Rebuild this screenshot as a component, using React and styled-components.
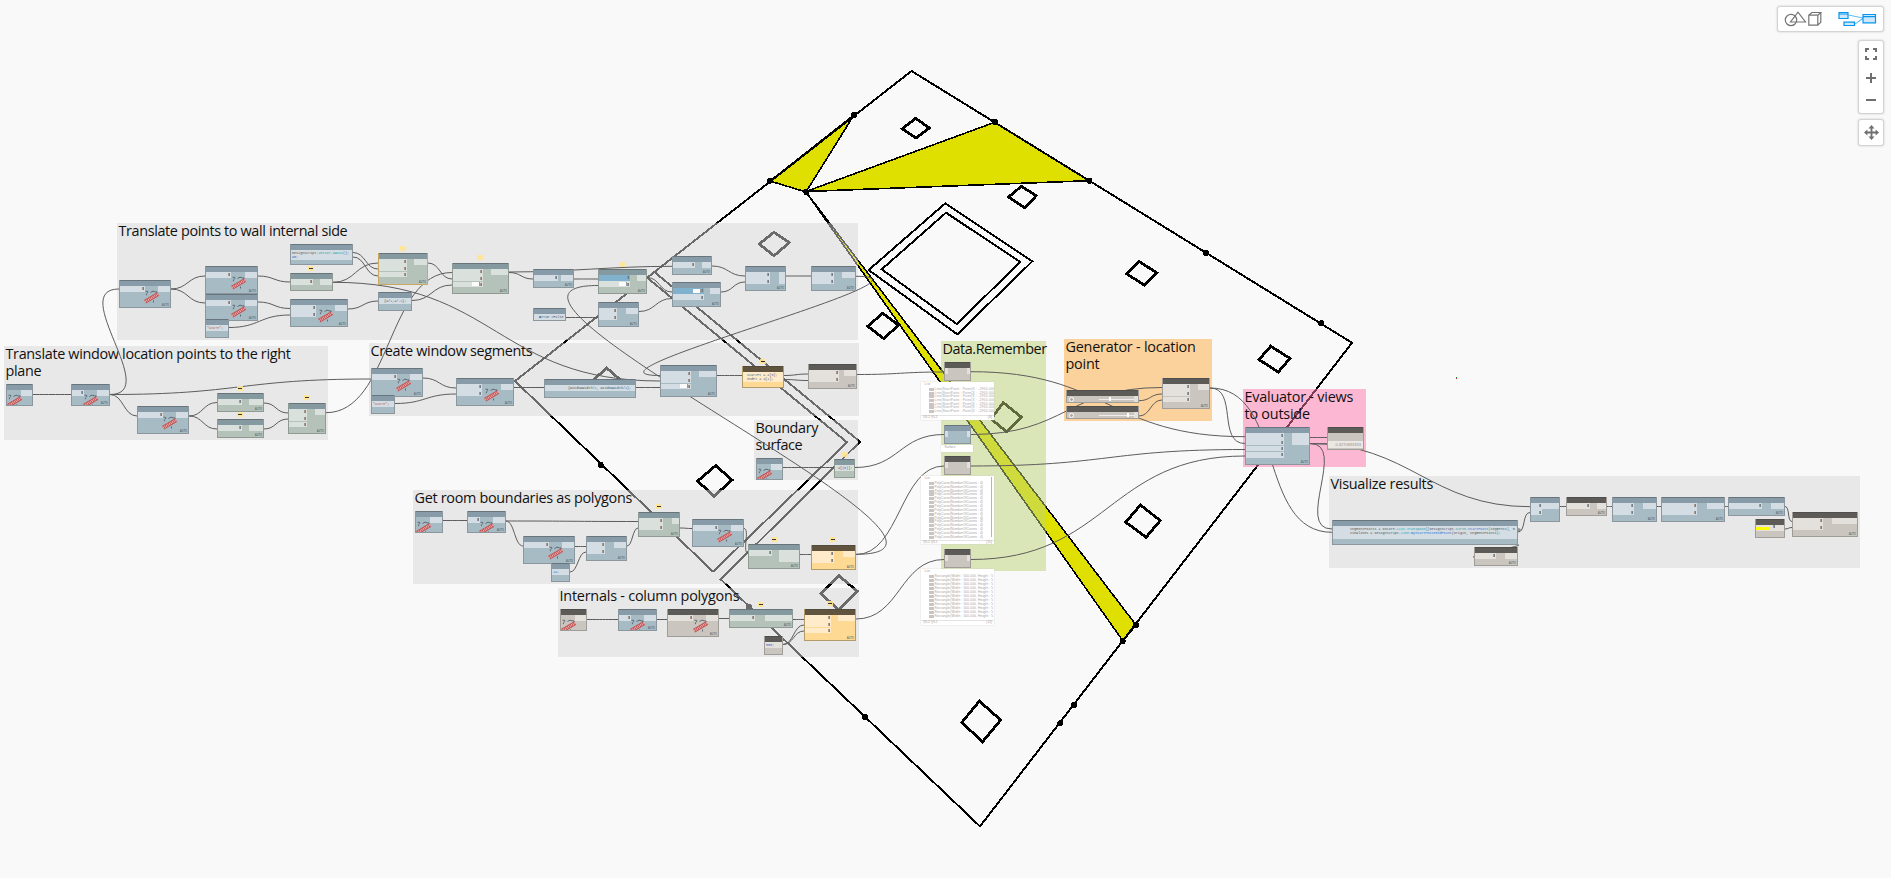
import React from "react";
import styled, { createGlobalStyle, css } from "styled-components";

const GlobalStyle = createGlobalStyle`
  body { margin: 0; background: #f9f9f9; overflow: hidden; font-family: "Open Sans", "Noto Sans", sans-serif; }
  * { box-sizing: border-box; }
`;

const Workspace = styled.main`
  position: relative;
  width: 1891px;
  height: 878px;
  overflow: hidden;
  background: #f9f9f9;
`;

const Layer = styled.svg`
  position: absolute;
  inset: 0;
  width: 1891px;
  height: 878px;
  pointer-events: none;
`;

const placed = css`
  position: absolute;
  left: ${(p) => p.$x}px;
  top: ${(p) => p.$y}px;
  width: ${(p) => p.$w}px;
  height: ${(p) => p.$h}px;
`;

const tints = {
  gray: "rgba(215,215,215,.494)",
  green: "rgba(190,212,119,.5)",
  orange: "rgba(255,171,64,.5)",
  pink: "rgba(255,120,171,.5)",
};

const Group = styled.section`
  ${placed}
  padding-left: 1.5px;
  background: ${(p) => tints[p.$tint]};
`;

const GroupTitle = styled.h2`
  margin: -1px 0 0;
  font-size: 14.4px;
  font-weight: 400;
  line-height: 17.3px;
  letter-spacing: ${(p) => p.$track ?? -0.32}px;
  color: #111;
  white-space: pre;
`;

/* ---------- nodes ---------- */
const kinds = {
  blue: { head: "#879ba8", body: "#a7bbc5", port: "#d3dde3", edge: "#8c979d" },
  green: { head: "#859aa0", body: "#b5c2ba", port: "#dae1dd", edge: "#8f9a93" },
  gray: { head: "#5d5b58", body: "#cbc5bf", port: "#e4e0dc", edge: "#a09c97" },
  gold: { head: "#61543f", body: "#fdd993", port: "#ffebca", edge: "#b39c6c" },
};

const NodeCard = styled.article`
  ${placed}
  display: flex;
  flex-direction: column;
  overflow: hidden;
  background: ${(p) => kinds[p.$kind].body};
  border: 1px solid ${(p) => p.$edge || kinds[p.$kind].edge};
  border-top: 0;
`;

const NodeHeader = styled.div`
  flex: none;
  height: 6px;
  margin: 0 -1px;
  border-top: 1px solid rgba(60, 60, 60, 0.4);
  background: ${(p) => kinds[p.$kind].head};
`;

const NodeBody = styled.div`
  position: relative;
  display: flex;
  justify-content: space-between;
  flex: 1;
`;

const Inputs = styled.div`
  display: flex;
  flex-direction: column;
  gap: 0.6px;
  width: ${(p) => p.$w}px;
`;

const InPort = styled.div`
  display: flex;
  align-items: center;
  justify-content: flex-end;
  height: 5.7px;
  padding-right: 1px;
  background: ${(p) => (p.$active ? "#80b2ce" : kinds[p.$kind].port)};
`;

const Chevron = styled.i`
  width: 2px;
  height: 3px;
  background: linear-gradient(90deg, #b79a83, #4f6175);
  opacity: 0.85;
`;

const DefaultValue = styled.i`
  width: 8px;
  height: 4px;
  background: #fbfbfb;
  border-right: 1px solid #999;
`;

const OutPort = styled.div`
  width: ${(p) => p.$w}px;
  height: ${(p) => p.$h || 6}px;
  background: ${(p) => kinds[p.$kind].port};
`;

const Lacing = styled.span`
  position: absolute;
  right: 1px;
  bottom: 0.5px;
  font: 700 2.6px/3px "Liberation Sans", sans-serif;
  color: rgba(70, 85, 95, 0.75);
`;

const PreviewSlot = styled.div`
  position: absolute;
  top: 1px;
  left: ${(p) => p.$left}px;
  width: 17px;
  height: 15px;
`;

const Code = styled.pre`
  margin: 0;
  flex: 1;
  height: ${(p) => p.$h}px;
  padding: 1px 0 0 ${(p) => p.$indent ?? 1}px;
  overflow: hidden;
  background: ${(p) => kinds[p.$kind].port};
  color: #4f565f;
  font: 3.4px/4px "Liberation Mono", monospace;
  b { font-weight: 400; color: #2f9a94; }
  i { font-style: normal; color: #2b6fd6; }
  em { font-style: normal; color: #c07545; }
`;

const Marks = () => (
  <svg width="17" height="15" viewBox="0 0 17 15">
    <path d="M2.5 2.3h2.2v1.4L3.4 4.8v1.4M7.5 3.5q2.5-2.4 5-.6h1.5v2M10.5 11.5v2" fill="none" stroke="#5f6b73" strokeWidth="1" />
    <path d="M2 12.8 15.2 5" stroke="#c25152" strokeWidth="4.2" />
    <path d="M2 12.8 15.2 5" stroke="#eab5b4" strokeWidth="2.4" strokeDasharray=".9 .9" />
  </svg>
);

function Node({ box, kind = "blue", ins = 0, rows = 1, out = 12, outH, active, value, glyph, lace = true, code, codeH = 6, indent, edge, children }) {
  const [x, y, w, h] = box;
  return (
    <NodeCard $x={x} $y={y} $w={w} $h={h} $kind={kind} $edge={edge}>
      <NodeHeader $kind={kind} />
      <NodeBody>
        {children || (code ? <Code $kind={kind} $h={codeH} $indent={indent}>{code}</Code> : (
          <>
            <Inputs $w={ins}>
              {ins > 0 && Array.from({ length: rows }, (_, i) => (
                <InPort key={i} $kind={kind} $active={active === i}>
                  {value === i && <DefaultValue />}
                  {ins > 8 && <Chevron />}
                </InPort>
              ))}
            </Inputs>
            {glyph !== undefined && <PreviewSlot $left={glyph}><Marks /></PreviewSlot>}
            <OutPort $w={out} $h={outH} $kind={kind} />
          </>
        ))}
        {lace && h > 18 && w > 35 && !code && <Lacing>AUTO</Lacing>}
      </NodeBody>
    </NodeCard>
  );
}

const nodes = [
  { box: [119, 280, 52, 28], ins: 25, glyph: 23 },
  { box: [205, 266, 53, 28], ins: 25, glyph: 24 },
  { box: [205, 294, 53, 27], ins: 25, glyph: 24 },
  { box: [205, 319, 24, 19], code: <><em>"WIDTH"</em>;</> },
  { box: [290, 244, 63, 21], codeH: 10, code: <>DesignScript.<b>Vector</b>.<b>ZAxis</b>();{"\n"}<i>90;</i></> },
  { box: [290, 273, 43, 18], kind: "green", ins: 22 },
  { box: [290, 299, 58, 28], ins: 25, rows: 2, glyph: 26 },
  { box: [378, 253, 50, 32], kind: "green", ins: 28, rows: 3, out: 13, edge: "#c9a95f" },
  { box: [378, 292, 34, 19], indent: 5, code: <>{"{"}a/<i>2</i>,a/<i>-2</i>{"};"}</> },
  { box: [452, 263, 57, 31], kind: "green", ins: 30, rows: 3, out: 17, value: 2 },
  { box: [533, 269, 41, 19], ins: 24 },
  { box: [533, 308, 33, 13], code: "  ◉True ○False" },
  { box: [598, 269, 49, 25], kind: "green", ins: 31, rows: 2, out: 9, active: 0, value: 1 },
  { box: [598, 302, 41, 25], ins: 18, rows: 2 },
  { box: [672, 256, 40, 19], ins: 22, out: 9 },
  { box: [672, 282, 49, 25], ins: 31, rows: 2, out: 10, active: 0, value: 0 },
  { box: [745, 266, 41, 25], ins: 24, rows: 2, out: 6, outH: 12 },
  { box: [811, 266, 45, 25], ins: 22, rows: 2, out: 13 },

  { box: [6, 384, 27, 22], glyph: -1, out: 11 },
  { box: [71, 384, 39, 22], ins: 12, glyph: 10 },
  { box: [137, 406, 52, 28], ins: 25, glyph: 23 },
  { box: [217, 393, 47, 19], kind: "green", ins: 24, out: 14 },
  { box: [217, 419, 47, 19], kind: "green", ins: 24, out: 14 },
  { box: [288, 403, 38, 31], kind: "green", ins: 18, rows: 3, out: 10 },

  { box: [371, 368, 52, 29], ins: 25, glyph: 23 },
  { box: [371, 395, 24, 19], code: <><em>"WIDTH"</em>;</> },
  { box: [456, 378, 58, 28], ins: 25, rows: 2, glyph: 26 },
  { box: [544, 379, 92, 19], indent: 23, code: <>{"{"}windowWidth/<i>2</i>, windowWidth/<i>2</i>{"};"}</> },
  { box: [660, 365, 57, 32], ins: 30, rows: 3, out: 17, value: 2 },
  { box: [742, 366, 42, 22], kind: "gold", codeH: 10, indent: 4, code: <>startPt = a[<i>0</i>];{"\n"}endPt = a[<i>1</i>];</> },
  { box: [808, 364, 49, 25], kind: "gray", ins: 30, rows: 2 },

  { box: [756, 458, 27, 22], glyph: -1, out: 11 },
  { box: [834, 459, 21, 19], kind: "green", indent: 3, code: <>a[<i>{"{0}"}</i>];</> },

  { box: [415, 511, 28, 22], glyph: -1 },
  { box: [467, 511, 39, 22], ins: 12, glyph: 10 },
  { box: [523, 536, 52, 28], ins: 25, glyph: 23 },
  { box: [551, 563, 19, 19], code: <i>2a;</i> },
  { box: [586, 536, 41, 25], ins: 18, rows: 2 },
  { box: [638, 512, 42, 25], kind: "green", ins: 24, rows: 2, out: 7 },
  { box: [692, 519, 52, 28], ins: 25, glyph: 23 },
  { box: [748, 544, 52, 25], kind: "green", ins: 23, out: 20, outH: 12 },
  { box: [811, 545, 45, 25], kind: "gold", ins: 22, rows: 2 },

  { box: [560, 609, 27, 22], kind: "gray", glyph: -1, out: 11 },
  { box: [618, 609, 39, 22], ins: 12, glyph: 10 },
  { box: [667, 609, 52, 28], kind: "gray", ins: 25, glyph: 24 },
  { box: [729, 609, 64, 19], kind: "green", ins: 25, out: 27 },
  { box: [764, 636, 19, 19], kind: "gray", code: <i>500;</i> },
  { box: [804, 609, 52, 32], kind: "gold", ins: 26, rows: 3, out: 17 },

  { box: [944, 362, 27, 19], kind: "gray", ins: 3, out: 3 },
  { box: [944, 425, 27, 19], ins: 3, out: 3 },
  { box: [944, 456, 27, 19], kind: "gray", ins: 3, out: 3 },
  { box: [944, 549, 27, 19], kind: "gray", ins: 3, out: 3 },

  { box: [1162, 378, 48, 31], kind: "gray", ins: 27, rows: 3, out: 11 },
  { box: [1245, 427, 65, 38], ins: 38, rows: 4, out: 17, outH: 12 },

  { box: [1332, 520, 186, 25], codeH: 13, indent: 17, code: <>segmentPoints = DSCore.<b>List</b>.<b>Transpose</b>([DesignScript.<b>Curve</b>.<i>StartPoint</i>(segments), 0{"\n"}viewlines = DesignScript.<b>Line</b>.<i>ByStartPointEndPoint</i>(origin, segmentPoints);</> },
  { box: [1474, 547, 44, 19], kind: "gray", ins: 21 },
  { box: [1530, 497, 30, 25], ins: 11, rows: 2, out: 18, lace: false },
  { box: [1566, 497, 41, 19], kind: "gray", ins: 23, out: 9 },
  { box: [1612, 497, 45, 25], ins: 21, rows: 2, out: 13 },
  { box: [1661, 497, 64, 25], ins: 35, rows: 2, out: 17 },
  { box: [1728, 497, 57, 19], ins: 33, out: 13 },
  { box: [1792, 512, 66, 25], kind: "gray", ins: 30, rows: 2, out: 25 },
];

const SliderStrip = styled.div`
  display: flex;
  align-items: center;
  width: 100%;
  height: 6px;
  padding: 0 1px 0 2px;
  background: linear-gradient(90deg, transparent 67px, #e4e0dc 67px);
`;
const SliderToggle = styled.i`
  width: 5px;
  height: 5px;
  border: 1px solid #fff;
  border-radius: 50%;
  background: #aaa;
`;
const SliderTrack = styled.i`
  position: relative;
  width: 35px;
  height: 1px;
  margin-left: 25px;
  background: #eee;
  &::after {
    content: "";
    position: absolute;
    top: -2px;
    left: ${(p) => p.$at}px;
    width: 2px;
    height: 4px;
    background: #fff;
  }
`;
const Readout = styled.div`
  align-self: flex-end;
  width: 100%;
  height: 7px;
  margin-bottom: 1px;
  padding: 1px 2px 0;
  text-align: right;
  background: #ebe7e3;
  color: #958f89;
  font: 4px/5px "Liberation Sans", sans-serif;
`;
const ColorField = styled.div`
  width: 14px;
  height: 3px;
  margin-top: 2px;
  background: #ff0;
`;
const FieldRow = styled.div`
  display: flex;
  gap: 3px;
  width: 100%;
  height: 6px;
  background: #e4e0dc;
`;

/* ---------- list previews ---------- */
const Preview = styled.div`
  ${placed}
  display: flex;
  flex-direction: column;
  overflow: hidden;
  background: #fff;
  box-shadow: 0 0 1px #bbb;
  color: #a29c9c;
  font: 3.2px/3.87px "Liberation Sans", sans-serif;
  letter-spacing: ${(p) => p.$track || 0}px;
  white-space: nowrap;
`;
const PreviewHead = styled.div`
  padding: 1px 0 1px 3.5px;
`;
const PreviewRow = styled.div`
  display: flex;
  gap: 1px;
  height: ${(p) => p.$h}px;
  padding-left: 8px;
  &::before {
    content: "";
    flex: none;
    width: 4.5px;
    height: 3px;
    background: #c9c5c5;
  }
`;
const PreviewFoot = styled.div`
  display: flex;
  flex: none;
  justify-content: space-between;
  height: 5px;
  margin-top: auto;
  padding: 0 2px;
  border-top: 1px solid #e3e3e3;
  letter-spacing: 0;
`;

const previews = [
  { box: [921, 382, 73, 38], n: 7, row: 3.7, track: 0.25, text: "Line(StartPoint : Point(X : -2950.000, Y", total: "{6}" },
  { box: [921, 476, 73, 68], n: 15, row: 3.87, track: 0.08, text: "PolyCurve(NumberOfCurves : 4)", total: "{15}" },
  { box: [921, 569, 73, 56], n: 11, row: 4, track: 0.15, text: "Rectangle(Width : 500.000, Height : 5", total: "{12}" },
];

const Scroll = styled.i`
  position: absolute;
  right: 2px;
  top: 1px;
  width: 1px;
  height: 60px;
  background: #b5b5b5;
`;

const Pin = styled.span`
  ${placed}
  display: flex;
  justify-content: center;
  padding-top: 2px;
  background: #ffe694;
  opacity: 0.9;
  &::before {
    content: "";
    width: 4px;
    height: 1px;
    background: ${(p) => (p.$dash ? "#222" : "transparent")};
  }
`;

const pins = [
  [240, 388, 1], [240, 414, 1], [307, 397.5, 1], [311, 268, 1], [402.5, 248.5, 0], [480, 257.5, 0], [623, 264, 0],
  [762.5, 361.5, 1], [844.5, 454, 0], [659, 506.5, 1], [773.5, 539, 1], [833, 539.5, 1], [760.5, 604, 1], [830, 603.5, 1],
];

/* Each wire: start x, start y, end x, end y, optional horizontal pull of the control points. */
const wires = [
  [171, 289, 205, 276], [171, 289, 205, 303], [258, 276, 290, 282], [258, 302, 290, 308.5], [229, 327.5, 290, 315],
  [353, 252.5, 378, 269], [353, 257, 378, 276], [333, 282.3, 378, 263], [333, 282.3, 660, 381], [348, 309, 378, 301],
  [412, 300.5, 452, 285], [428, 263, 452, 279], [326, 412.7, 452, 272.5, 65], [509, 272.5, 533, 279], [509, 272, 672, 266.3, 60],
  [574, 279, 598, 279], [856, 554.3, 598, 285.5, 168], [566, 317.5, 598, 317.5], [647, 277.5, 672, 292], [639, 311.5, 672, 298.5],
  [712, 266, 745, 276], [721, 292, 745, 282], [786, 276, 811, 276], [856, 276.3, 660, 375.5, 100], [636, 387.5, 660, 387.5],
  [717, 375.5, 742, 375.5], [784, 375.5, 808, 374], [784, 379.5, 808, 380.5], [857, 374.5, 944, 372],
  [33, 394.5, 71, 394.5], [110, 394.5, 137, 416], [110, 394.5, 371, 379], [110, 394.5, 119, 289, 52], [189, 416, 217, 402.5],
  [189, 416, 217, 429], [264, 403, 288, 413], [264, 429, 288, 419], [423, 378, 456, 388], [395, 403.5, 456, 394], [514, 387.5, 544, 387.5],
  [783, 467.5, 834, 467.5], [855, 467.5, 944, 434.5], [443, 520.5, 467, 520.5], [506, 521, 638, 521.5], [506, 521, 523, 546],
  [575, 546.5, 586, 546.5], [570, 572, 586, 552], [627, 546, 638, 528], [680, 528, 692, 528.5], [744, 528.5, 748, 553, 6],
  [800, 554.5, 811, 554.5], [856, 554.5, 944, 466], [587, 619.5, 618, 619.5], [657, 619.5, 667, 619.5], [719, 618.5, 729, 618.5],
  [793, 619.5, 804, 619.5], [783, 644.5, 804, 625], [783, 644.5, 804, 631], [856, 619, 944, 559.5],
  [971, 371.7, 1245, 436.7], [971, 434.5, 1162, 387.5], [971, 466, 1245, 449.5], [971, 559.5, 1245, 456],
  [1139, 400.7, 1162, 394], [1139, 416, 1162, 400], [1210, 388, 1245, 443.5, 28], [1210, 388, 1332, 532.3, 75],
  [1310, 443.5, 1332, 529, 38], [1310, 437.5, 1327, 437.5], [1310, 443.7, 1327, 443.7], [1310, 443.5, 1530, 506.7, 100],
  [1518, 532, 1530, 512.5, 8], [1518, 529, 1518, 533, 8], [1518, 545, 1474, 557, 8], [1560, 506.5, 1566, 506.5], [1607, 506.5, 1612, 506.5], [1657, 506.5, 1661, 506.5],
  [1725, 506.5, 1728, 506.5], [1785, 506.5, 1792, 521.5, 5], [1785, 529, 1792, 527.5],
];

const wirePath = ([x1, y1, x2, y2, pull]) => {
  const d = pull ?? (x2 - x1) / 2;
  return `M${x1} ${y1}C${x1 + d} ${y1} ${x2 - d} ${y2} ${x2} ${y2}`;
};

const columns = [
  "915.7,118.3 929.3,128 916,138 902.3,128.7",
  "1021.3,186.3 1036.3,195.7 1024.7,207.7 1008.7,197",
  "774,232.3 789.3,242.7 774,255.7 759.3,244",
  "882.7,313.3 898.3,325 884,338.7 867.7,326.3",
  "1139.3,261.5 1156.6,272.8 1144.5,285.2 1126.9,274",
  "1270.7,346.2 1290,358.4 1278.3,372 1259,359.6",
  "1003.3,402.7 1021.3,417 1007,432 991,419",
  "1140.5,505 1160.2,520.6 1146.1,537.2 1125.7,522.2",
  "979.4,701.2 1000.7,720 982.6,741.7 961.7,722.5",
  "715.7,465.5 732,480 714,496.3 697.7,481",
  "839,575.7 857.3,591.3 839,610 821,593.7",
  "606.7,368 624,383 606,396 590,383",
];

const vertices = [
  [854.3, 114.7], [770, 180.7], [994.7, 121.7], [1089.3, 180.7], [806.3, 192], [1206, 253], [1321.3, 323.3], [1136.1, 625],
  [1122.8, 641], [1074.2, 704.7], [1060.2, 723.3], [864.9, 716.8], [600.7, 465], [749, 606.7],
];

const FloorPlan = () => (
  <Layer viewBox="0 0 1891 878" shapeRendering="crispEdges">
    <g fill="#e0e000" stroke="#000" strokeWidth="1.6">
      <path d="M854 115 770 181 806 192ZM806 191.5 994.7 122.3 1089.3 180.7Z" />
      <path d="M806 192 1136 625 1123 641Z" />
    </g>
    <g fill="none" stroke="#000" strokeWidth="2">
      <path d="M713 571.7 515 381 911.5 71 1352 342.8 980 826.4 720.7 579.3 860 441.7 654 271.7M713 571.7 847 442.3 646 276.7" />
      <path d="M945.3 203.3 1032.3 261.3 957.3 334.3 868.7 270ZM946 212.7 1020.3 262 956.7 324 881.7 269.3Z" />
      {columns.map((c) => <polygon key={c} points={c} strokeWidth="2.8" />)}
    </g>
    {vertices.map(([x, y]) => <circle key={x} cx={x} cy={y} r="3" />)}
    <rect x="1456" y="377" width="1" height="1" fill="#2a8a3a" />
    <rect x="1456" y="378" width="1" height="1" fill="#d02020" />
  </Layer>
);

/* ---------- view controls ---------- */
const Controls = styled.nav`
  position: absolute;
  top: 7px;
  right: 8px;
  display: flex;
  flex-direction: column;
  align-items: flex-end;
`;
const ControlBox = styled.div`
  display: flex;
  flex-direction: ${(p) => (p.$column ? "column" : "row")};
  width: ${(p) => p.$w}px;
  height: ${(p) => p.$h}px;
  margin-bottom: ${(p) => p.$gap || 0}px;
  padding-top: ${(p) => (p.$column ? 1 : 0)}px;
  background: #fff;
  border-radius: 2px;
  box-shadow: 0 0 2px 0.5px #c6c6c6;
`;
const ControlButton = styled.button`
  display: flex;
  flex: 1;
  align-items: center;
  justify-content: center;
  padding: 0 0 0 ${(p) => p.$shift || 0}px;
  border: 0;
  background: none;
  & + & { border-left: ${(p) => (p.$split ? "1px solid #d8d8d8" : "0")}; }
`;

export default function App() {
  return (
    <>
      <GlobalStyle />
      <Workspace>
        <FloorPlan />
        <Group $x={117} $y={223} $w={741} $h={117} $tint="gray"><GroupTitle $track={-0.36}>Translate points to wall internal side</GroupTitle></Group>
        <Group $x={4} $y={346} $w={324} $h={94} $tint="gray"><GroupTitle>{"Translate window location points to the right\nplane"}</GroupTitle></Group>
        <Group $x={369} $y={343} $w={490} $h={73} $tint="gray"><GroupTitle>Create window segments</GroupTitle></Group>
        <Group $x={754} $y={420} $w={104} $h={60} $tint="gray"><GroupTitle $track={-0.38}>{"Boundary\nsurface"}</GroupTitle></Group>
        <Group $x={413} $y={490} $w={445} $h={94} $tint="gray"><GroupTitle $track={-0.3}>Get room boundaries as polygons</GroupTitle></Group>
        <Group $x={558} $y={588} $w={301} $h={69} $tint="gray"><GroupTitle $track={-0.22}>Internals - column polygons</GroupTitle></Group>
        <Group $x={941} $y={341} $w={105} $h={230} $tint="green"><GroupTitle $track={-0.44}>Data.Remember</GroupTitle></Group>
        <Group $x={1064} $y={339} $w={148} $h={82} $tint="orange"><GroupTitle $track={-0.22}>{"Generator - location\npoint"}</GroupTitle></Group>
        <Group $x={1243} $y={389} $w={123} $h={78} $tint="pink"><GroupTitle $track={-0.22}>{"Evaluator - views\nto outside"}</GroupTitle></Group>
        <Group $x={1329} $y={476} $w={531} $h={92} $tint="gray"><GroupTitle $track={-0.26}>Visualize results</GroupTitle></Group>

        <Layer viewBox="0 0 1891 878">
          <g fill="none" stroke="#5c5c5c" strokeWidth="1">
            {wires.map((w, i) => <path key={i} d={wirePath(w)} />)}
          </g>
        </Layer>

        {nodes.map((n) => <Node key={n.box.join()} {...n} />)}
        {[[390, 10], [406, 28]].map(([y, at]) => (
          <Node key={y} box={[1066, y, 73, 13]} kind="gray" lace={false}>
            <SliderStrip><SliderToggle /><SliderTrack $at={at} /></SliderStrip>
          </Node>
        ))}
        <Node box={[1327, 427, 37, 23]} kind="gray" lace={false}><Readout>0.3270833333</Readout></Node>
        <Node box={[1755, 519, 30, 19]} kind="gray" lace={false}><FieldRow><ColorField /><Chevron /></FieldRow></Node>

        {previews.map(({ box: [x, y, w, h], n, row, track, text, total }) => (
          <Preview key={y} $x={x} $y={y} $w={w} $h={h} $track={track}>
            <PreviewHead>List</PreviewHead>
            {Array.from({ length: n }, (_, i) => <PreviewRow key={i} $h={row}>{text}</PreviewRow>)}
            {n === 15 && <Scroll />}
            <PreviewFoot><span>@L2 @L1</span><span>{total}</span></PreviewFoot>
          </Preview>
        ))}
        <Preview $x={941} $y={445} $w={32} $h={7}><PreviewHead>Surface</PreviewHead></Preview>

        {pins.map(([x, y, dash]) => <Pin key={`${x},${y}`} $x={x - 3} $y={y - 2.5} $w={6} $h={5} $dash={dash} />)}

        <Controls>
          <ControlBox $w={105} $h={24} $gap={10}>
            <ControlButton $split>
              <svg width="38" height="16" viewBox="0 0 38 16" fill="none" stroke="#757575" strokeWidth="1.2">
                <circle cx="7" cy="9" r="5.7" /><path d="M6.5 11h15L14 1.2Z" />
                <path d="M24.8 4.2h9v10h-9ZM24.8 4.2l3-2.7h9l-3 2.7M36.8 1.5v9.7l-3 3" />
              </svg>
            </ControlButton>
            <ControlButton $split $shift={4}>
              <svg width="39" height="16" viewBox="0 0 39 16" fill="#cde8fb" stroke="#0696ee" strokeWidth="1.2">
                <path d="M10.5 4 25 7M16 13.2q3-1 5-3t5-2.5" fill="none" stroke="#67bdf4" />
                <path d="M1 1.5h9v6H1ZM1 3h9M6 11.2h10.5v3.3H6ZM25 3.5h12.5v8.3H25ZM25 5.7h12.5" />
              </svg>
            </ControlButton>
          </ControlBox>
          <ControlBox $column $w={24} $h={72} $gap={7}>
            <ControlButton>
              <svg width="12" height="12" fill="none" stroke="#6f6f6f" strokeWidth="2"><path d="M1 4V1h3M8 1h3v3M11 8v3H8M4 11H1V8" /></svg>
            </ControlButton>
            <ControlButton>
              <svg width="12" height="12" stroke="#6f6f6f" strokeWidth="2"><path d="M1 6h10M6 1v10" /></svg>
            </ControlButton>
            <ControlButton>
              <svg width="12" height="12" stroke="#6f6f6f" strokeWidth="2"><path d="M1 5h10" /></svg>
            </ControlButton>
          </ControlBox>
          <ControlBox $w={24} $h={25}>
            <ControlButton>
              <svg width="15" height="15" viewBox="0 0 15 15" fill="#6f6f6f"><path d="M7.5 0 10.5 3.4H8.4V6.6H11.6V4.5L15 7.5 11.6 10.5V8.4H8.4V11.6H10.5L7.5 15 4.5 11.6H6.6V8.4H3.4V10.5L0 7.5 3.4 4.5V6.6H6.6V3.4H4.5Z" /></svg>
            </ControlButton>
          </ControlBox>
        </Controls>
      </Workspace>
    </>
  );
}
